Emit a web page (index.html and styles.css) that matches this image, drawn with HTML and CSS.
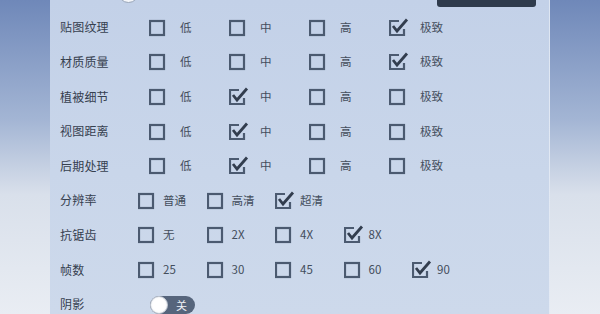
FILE: index.html
```html
<!DOCTYPE html>
<html lang="zh-CN">
<head>
  <meta charset="UTF-8" />
  <meta name="viewport" content="width=device-width, initial-scale=1.0" />
  <title>画面设置</title>
  <link rel="stylesheet" href="styles.css">
</head>
<body>
  <div class="panel">
    <!-- 上一行只露出一点 -->
    <div class="row row-top">
      <span class="slider-knob"></span>
      <span class="top-btn"></span>
    </div>

    <div class="row wide">
      <span class="label">贴图纹理</span>
      <div class="opt"><svg class="box" viewBox="0 0 20 19"><rect x="1" y="3" width="14" height="14"/></svg><span>低</span></div>
      <div class="opt"><svg class="box" viewBox="0 0 20 19"><rect x="1" y="3" width="14" height="14"/></svg><span>中</span></div>
      <div class="opt"><svg class="box" viewBox="0 0 20 19"><rect x="1" y="3" width="14" height="14"/></svg><span>高</span></div>
      <div class="opt"><svg class="box on" viewBox="0 0 20 19"><path class="frame" d="M10 3 H1 V17 H15 V11"/><path class="tick" d="M4 8 L8 13 L18 1.5"/></svg><span>极致</span></div>
    </div>

    <div class="row wide">
      <span class="label">材质质量</span>
      <div class="opt"><svg class="box" viewBox="0 0 20 19"><rect x="1" y="3" width="14" height="14"/></svg><span>低</span></div>
      <div class="opt"><svg class="box" viewBox="0 0 20 19"><rect x="1" y="3" width="14" height="14"/></svg><span>中</span></div>
      <div class="opt"><svg class="box" viewBox="0 0 20 19"><rect x="1" y="3" width="14" height="14"/></svg><span>高</span></div>
      <div class="opt"><svg class="box on" viewBox="0 0 20 19"><path class="frame" d="M10 3 H1 V17 H15 V11"/><path class="tick" d="M4 8 L8 13 L18 1.5"/></svg><span>极致</span></div>
    </div>

    <div class="row wide">
      <span class="label">植被细节</span>
      <div class="opt"><svg class="box" viewBox="0 0 20 19"><rect x="1" y="3" width="14" height="14"/></svg><span>低</span></div>
      <div class="opt"><svg class="box on" viewBox="0 0 20 19"><path class="frame" d="M10 3 H1 V17 H15 V11"/><path class="tick" d="M4 8 L8 13 L18 1.5"/></svg><span>中</span></div>
      <div class="opt"><svg class="box" viewBox="0 0 20 19"><rect x="1" y="3" width="14" height="14"/></svg><span>高</span></div>
      <div class="opt"><svg class="box" viewBox="0 0 20 19"><rect x="1" y="3" width="14" height="14"/></svg><span>极致</span></div>
    </div>

    <div class="row wide">
      <span class="label">视图距离</span>
      <div class="opt"><svg class="box" viewBox="0 0 20 19"><rect x="1" y="3" width="14" height="14"/></svg><span>低</span></div>
      <div class="opt"><svg class="box on" viewBox="0 0 20 19"><path class="frame" d="M10 3 H1 V17 H15 V11"/><path class="tick" d="M4 8 L8 13 L18 1.5"/></svg><span>中</span></div>
      <div class="opt"><svg class="box" viewBox="0 0 20 19"><rect x="1" y="3" width="14" height="14"/></svg><span>高</span></div>
      <div class="opt"><svg class="box" viewBox="0 0 20 19"><rect x="1" y="3" width="14" height="14"/></svg><span>极致</span></div>
    </div>

    <div class="row wide">
      <span class="label">后期处理</span>
      <div class="opt"><svg class="box" viewBox="0 0 20 19"><rect x="1" y="3" width="14" height="14"/></svg><span>低</span></div>
      <div class="opt"><svg class="box on" viewBox="0 0 20 19"><path class="frame" d="M10 3 H1 V17 H15 V11"/><path class="tick" d="M4 8 L8 13 L18 1.5"/></svg><span>中</span></div>
      <div class="opt"><svg class="box" viewBox="0 0 20 19"><rect x="1" y="3" width="14" height="14"/></svg><span>高</span></div>
      <div class="opt"><svg class="box" viewBox="0 0 20 19"><rect x="1" y="3" width="14" height="14"/></svg><span>极致</span></div>
    </div>

    <div class="row compact">
      <span class="label">分辨率</span>
      <div class="opt"><svg class="box" viewBox="0 0 20 19"><rect x="1" y="3" width="14" height="14"/></svg><span>普通</span></div>
      <div class="opt"><svg class="box" viewBox="0 0 20 19"><rect x="1" y="3" width="14" height="14"/></svg><span>高清</span></div>
      <div class="opt"><svg class="box on" viewBox="0 0 20 19"><path class="frame" d="M10 3 H1 V17 H15 V11"/><path class="tick" d="M4 8 L8 13 L18 1.5"/></svg><span>超清</span></div>
    </div>

    <div class="row compact">
      <span class="label">抗锯齿</span>
      <div class="opt"><svg class="box" viewBox="0 0 20 19"><rect x="1" y="3" width="14" height="14"/></svg><span>无</span></div>
      <div class="opt"><svg class="box" viewBox="0 0 20 19"><rect x="1" y="3" width="14" height="14"/></svg><span>2X</span></div>
      <div class="opt"><svg class="box" viewBox="0 0 20 19"><rect x="1" y="3" width="14" height="14"/></svg><span>4X</span></div>
      <div class="opt"><svg class="box on" viewBox="0 0 20 19"><path class="frame" d="M10 3 H1 V17 H15 V11"/><path class="tick" d="M4 8 L8 13 L18 1.5"/></svg><span>8X</span></div>
    </div>

    <div class="row compact">
      <span class="label">帧数</span>
      <div class="opt"><svg class="box" viewBox="0 0 20 19"><rect x="1" y="3" width="14" height="14"/></svg><span>25</span></div>
      <div class="opt"><svg class="box" viewBox="0 0 20 19"><rect x="1" y="3" width="14" height="14"/></svg><span>30</span></div>
      <div class="opt"><svg class="box" viewBox="0 0 20 19"><rect x="1" y="3" width="14" height="14"/></svg><span>45</span></div>
      <div class="opt"><svg class="box" viewBox="0 0 20 19"><rect x="1" y="3" width="14" height="14"/></svg><span>60</span></div>
      <div class="opt"><svg class="box on" viewBox="0 0 20 19"><path class="frame" d="M10 3 H1 V17 H15 V11"/><path class="tick" d="M4 8 L8 13 L18 1.5"/></svg><span>90</span></div>
    </div>

    <div class="row switch-row">
      <span class="label">阴影</span>
      <div class="switch"><span class="switch-knob"></span><span class="switch-text">关</span></div>
    </div>
  </div>
</body>
</html>
```

FILE: styles.css
```css
body {
  margin: 0;
  height: 314px;
  overflow: hidden;
  font-family: "Noto Sans CJK SC", "Noto Sans", sans-serif;
  background: linear-gradient(180deg, #6f88b9 0%, #a3b5d4 38%, #d9e0eb 62%, #e9edf3 100%);
}
.panel {
  display: flex;
  flex-direction: column;
  margin: 0 50px;
  height: 314px;
  background: linear-gradient(180deg, #c3d1e8 0%, #c9d6ea 55%, #cdd9eb 100%);
  border-right: 1px solid rgba(255,255,255,0.45);
  box-sizing: border-box;
  padding-left: 10px;
}
.row {
  display: flex;
  align-items: center;
  flex: none;
  height: 34.6px;
}
.row-top {
  margin-top: -25px;
}
.slider-knob {
  width: 21px;
  height: 21px;
  border-radius: 50%;
  background: #f4f6fa;
  border: 1px solid #9aa6b8;
  box-sizing: border-box;
  margin-left: 58px;
}
.top-btn {
  align-self: stretch;
  margin: 0 13px 3px auto;
  width: 99px;
  background: #2f3b4c;
  border-radius: 0 0 3px 3px;
}
.label {
  font-size: 12px;
  color: #36404f;
  letter-spacing: 0.2px;
}
.wide .label { width: 89px; }
.compact .label { width: 78px; }
.switch-row .label { width: 90px; }
.opt {
  display: flex;
  align-items: center;
  font-size: 11.5px;
  color: #434d5c;
}
.wide .opt { width: 80px; }
.wide .opt span { margin-left: 11px; }
.compact .opt { width: 68.5px; }
.compact .opt span { margin-left: 5px; }
.box {
  width: 20px;
  height: 19px;
  margin-top: 1px;
  fill: none;
}
.box rect, .box .frame {
  stroke: #4b5a70;
  stroke-width: 2.2;
}
.box .tick {
  stroke: #323d4e;
  stroke-width: 2.8;
  stroke-linejoin: miter;
}
.switch {
  display: flex;
  align-items: center;
  width: 45px;
  height: 18px;
  border-radius: 9px;
  background: #56657c;
  margin-top: 3px;
}
.switch-knob {
  width: 18px;
  height: 18px;
  border-radius: 50%;
  background: radial-gradient(circle, #ffffff 55%, #e2e6ec 100%);
  border: 1px solid #c4cad4;
  box-sizing: border-box;
}
.switch-text {
  margin-left: 8px;
  font-size: 11px;
  color: #eef1f5;
}
```
